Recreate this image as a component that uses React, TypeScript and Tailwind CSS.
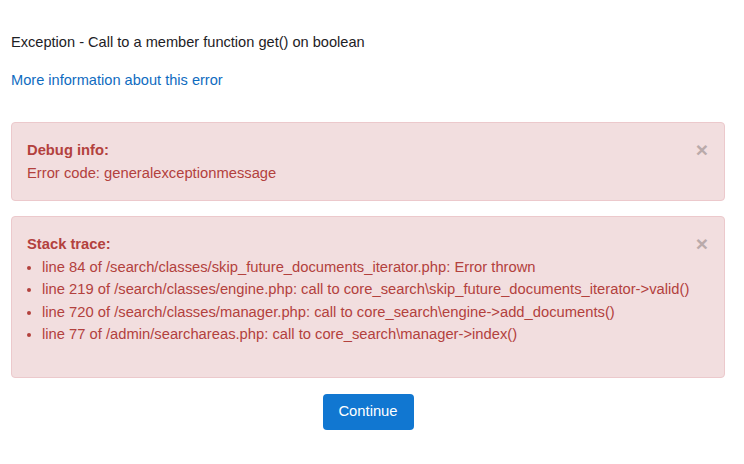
const trace = [
    'line 84 of /search/classes/skip_future_documents_iterator.php: Error thrown',
    'line 219 of /search/classes/engine.php: call to core_search\\skip_future_documents_iterator->valid()',
    'line 720 of /search/classes/manager.php: call to core_search\\engine->add_documents()',
    'line 77 of /admin/searchareas.php: call to core_search\\manager->index()',
];

const CloseBtn = () => (
    <button className="absolute right-[16px] top-[16px] text-[21px] leading-none font-bold text-[#b5a5a5] opacity-90">
        ×
    </button>
);

export default function App() {
    return (
        <div
            className="w-[744px] h-[464px] bg-white text-[14.6px] leading-[22.5px] text-[#1d2125]"
            style={{ fontFamily: '"Liberation Sans", Arial, sans-serif' }}
        >
            <div className="ml-[11px] w-[714px] pt-[31px]">
                <p>Exception - Call to a member function get() on boolean</p>
                <p className="mt-[15.5px]">
                    <a href="#" className="text-[#0f6cbf]">More information about this error</a>
                </p>

                {/* Debug info */}
                <div className="relative mt-[30.5px] rounded-[4px] border border-[#ecc9cc] bg-[#f2dedf] text-[#b3413d] text-[14.75px] px-[15px] pt-[16px] pb-[16px]">
                    <CloseBtn />
                    <div className="font-bold">Debug info:</div>
                    <div>Error code: generalexceptionmessage</div>
                </div>

                {/* Stack trace */}
                <div className="relative mt-[15px] rounded-[4px] border border-[#ecc9cc] bg-[#f2dedf] text-[#b3413d] text-[14.75px] px-[15px] pt-[16px] pb-[31px]">
                    <CloseBtn />
                    <div className="font-bold">Stack trace:</div>
                    <ul className="list-disc pl-[15px]">
                        {trace.map(t => (
                            <li key={t}>{t}</li>
                        ))}
                    </ul>
                </div>

                <div className="flex justify-center mt-[16px]">
                    <button className="w-[91px] h-[36px] rounded-[4px] bg-[#1177d1] text-white text-[14.75px]">
                        Continue
                    </button>
                </div>
            </div>
        </div>
    );
}
